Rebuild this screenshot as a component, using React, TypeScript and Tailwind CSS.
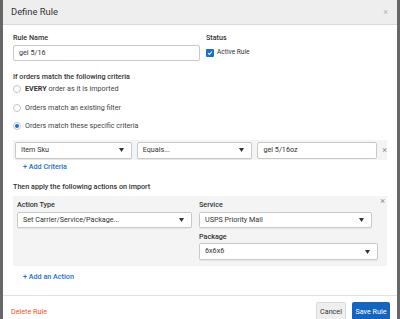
import React from 'react';

const Caret = () => (
  <svg width="5" height="4" viewBox="0 0 5 4" className="shrink-0">
    <path d="M0 0H5L2.5 4Z" fill="#333" />
  </svg>
);

const Select = ({ value, className = '' }: { value: string; className?: string }) => (
  <div
    className={`flex items-center justify-between bg-white border border-[#c9c9c9] rounded-[2px] pl-[5px] pr-[7px] text-[7.2px] text-[#333] shadow-[0_1px_1px_rgba(0,0,0,0.06)] ${className}`}
  >
    <span>{value}</span>
    <Caret />
  </div>
);

const Radio = ({ checked }: { checked?: boolean }) => (
  <span className="w-[8px] h-[8px] rounded-full border border-[#c6c6c6] bg-white flex items-center justify-center shrink-0">
    {checked && <span className="w-[4px] h-[4px] rounded-full bg-[#1a6fd0]" />}
  </span>
);

const Close = ({ className = '' }: { className?: string }) => (
  <span className={`text-[9px] leading-none text-[#8f8f8f] ${className}`}>×</span>
);

export default function App() {
  return (
    <div className="w-[400px] h-[319px] overflow-hidden bg-[#666] px-[3px] font-['Roboto',sans-serif]">
      <div className="bg-white h-[340px] flex flex-col">
        {/* Header */}
        <div className="h-[25px] bg-[#eeeeee] border-b border-[#dadada] flex items-center justify-between pl-[8px] pr-[9px]">
          <span className="text-[9.4px] text-[#333]">Define Rule</span>
          <Close className="text-[#b5b5b5]" />
        </div>

        {/* Body */}
        <div className="px-[10px] pt-[7px] text-[#333]">
          <div className="flex gap-[6px]">
            <div className="w-[187px]">
              <div className="h-[12px] leading-[12px] text-[7.2px] font-medium">Rule Name</div>
              <div className="mt-[1px] h-[16px] border border-[#c9c9c9] rounded-[2px] flex items-center px-[5px] text-[7.2px]">
                gel 5/16
              </div>
            </div>
            <div>
              <div className="h-[12px] leading-[12px] text-[7.2px] font-medium">Status</div>
              <div className="mt-[4px] flex items-center gap-[3px]">
                <span className="w-[8px] h-[8px] bg-[#1a6fd0] rounded-[1px] flex items-center justify-center">
                  <svg width="6" height="6" viewBox="0 0 6 6">
                    <path d="M1 3.2L2.4 4.5L5 1.5" stroke="white" strokeWidth="1.1" fill="none" />
                  </svg>
                </span>
                <span className="text-[6.6px]">Active Rule</span>
              </div>
            </div>
          </div>

          <div className="mt-[11px] h-[10px] leading-[10px] text-[7.2px] font-medium">
            If orders match the following criteria
          </div>
          <div className="h-[14px] flex items-center gap-[4px] text-[7.2px] text-[#444]">
            <Radio />
            <span>
              <b className="font-bold text-[#333]">EVERY</b> order as it is imported
            </span>
          </div>
          <div className="mt-[5px] h-[14px] flex items-center gap-[4px] text-[7.2px] text-[#444]">
            <Radio />
            <span>Orders match an existing filter</span>
          </div>
          <div className="mt-[4px] h-[14px] flex items-center gap-[4px] text-[7.2px] text-[#444]">
            <Radio checked />
            <span>Orders match these specific criteria</span>
          </div>

          {/* Criteria row */}
          <div className="mt-[7px] h-[20px] bg-[#f4f4f4] flex items-center pl-[2px] gap-[5px]">
            <Select value="Item Sku" className="w-[117px] h-[17px]" />
            <Select value="Equals..." className="w-[116px] h-[17px]" />
            <div className="w-[120px] h-[17px] bg-white border border-[#c9c9c9] rounded-[2px] flex items-center px-[5px] text-[7.2px]">
              gel 5/16oz
            </div>
            <Close />
          </div>

          <div className="mt-[2px] h-[10px] leading-[10px] pl-[10px] text-[7.2px] font-medium text-[#1a6fd0]">
            + Add Criteria
          </div>

          <div className="mt-[10px] h-[10px] leading-[10px] text-[7.2px] font-medium">
            Then apply the following actions on import
          </div>

          {/* Action box */}
          <div className="relative mt-[4px] h-[70px] bg-[#f4f4f4] pl-[4px] pt-[4px] flex gap-[7px]">
            <div className="w-[175px]">
              <div className="h-[10px] leading-[10px] text-[7.2px] font-medium">Action Type</div>
              <Select value="Set Carrier/Service/Package..." className="mt-[2px] h-[16px]" />
            </div>
            <div>
              <div className="h-[10px] leading-[10px] text-[7.2px] font-medium">Service</div>
              <Select value="USPS Priority Mail" className="mt-[2px] h-[16px] w-[173px]" />
              <div className="mt-[4px] h-[10px] leading-[10px] text-[7.2px] font-medium">Package</div>
              <Select value="6x6x6" className="mt-[1px] h-[17px] w-[179px]" />
            </div>
            <Close className="absolute right-[2px] top-[1px]" />
          </div>

          <div className="mt-[6px] h-[10px] leading-[10px] pl-[10px] text-[7.2px] font-medium text-[#1a6fd0]">
            + Add an Action
          </div>
        </div>

        {/* Footer */}
        <div className="mt-[13px] border-t border-[#e2e2e2] pt-[6px] pl-[8px] pr-[7px] flex items-center justify-between">
          <span className="text-[7.2px] text-[#f4511e]">Delete Rule</span>
          <div className="flex gap-[6px]">
            <div className="w-[30px] h-[20px] rounded-[2px] bg-[#eeeeee] border border-[#dcdcdc] flex items-center justify-center text-[7.2px] text-[#333]">
              Cancel
            </div>
            <div className="w-[38px] h-[20px] rounded-[2px] bg-[#1565c0] flex items-center justify-center text-[7.2px] text-white">
              Save Rule
            </div>
          </div>
        </div>
      </div>
    </div>
  );
}
